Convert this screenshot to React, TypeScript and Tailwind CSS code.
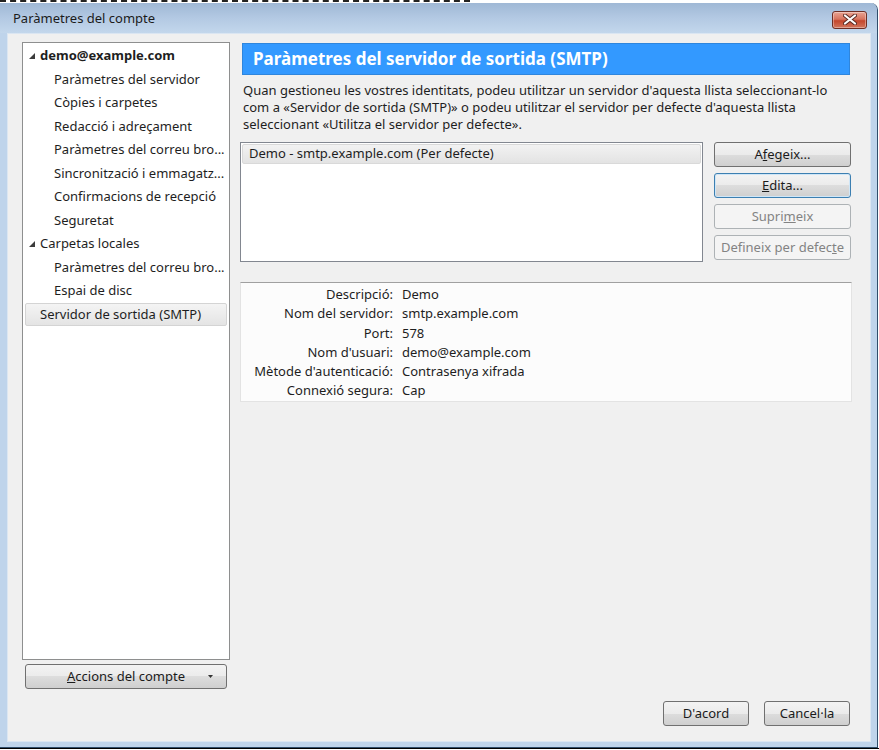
import React from 'react'

const font = { fontFamily: '"Noto Sans", "Open Sans", "Liberation Sans", sans-serif' }

const btnBase =
  'h-[25px] rounded-[3px] border text-[13px] flex items-center justify-center whitespace-nowrap'
const btnNormal =
  'border-[#707070] text-[#1b1b1b] bg-[linear-gradient(to_bottom,#f3f3f3_0%,#ebebeb_50%,#dddddd_50%,#cfcfcf_100%)]'
const btnFocus =
  'border-[#3c7fb1] text-[#1b1b1b] shadow-[inset_0_0_0_1px_#cfe6f7] bg-[linear-gradient(to_bottom,#f3f3f3_0%,#ebebeb_50%,#dddddd_50%,#cfcfcf_100%)]'
const btnDisabled = 'border-[#adb2b5] text-[#838383] bg-[#f4f4f4]'

type TreeItem = { label: string; level: 0 | 1; bold?: boolean; expander?: boolean; selected?: boolean }

const tree: TreeItem[] = [
  { label: 'demo@example.com', level: 0, bold: true, expander: true },
  { label: 'Paràmetres del servidor', level: 1 },
  { label: 'Còpies i carpetes', level: 1 },
  { label: 'Redacció i adreçament', level: 1 },
  { label: 'Paràmetres del correu bro...', level: 1 },
  { label: 'Sincronització i emmagatz...', level: 1 },
  { label: 'Confirmacions de recepció', level: 1 },
  { label: 'Seguretat', level: 1 },
  { label: 'Carpetas locales', level: 0, expander: true },
  { label: 'Paràmetres del correu bro...', level: 1 },
  { label: 'Espai de disc', level: 1 },
  { label: 'Servidor de sortida (SMTP)', level: 0, selected: true },
]

const details: [string, string][] = [
  ['Descripció:', 'Demo'],
  ['Nom del servidor:', 'smtp.example.com'],
  ['Port:', '578'],
  ["Nom d'usuari:", 'demo@example.com'],
  ["Mètode d'autenticació:", 'Contrasenya xifrada'],
  ['Connexió segura:', 'Cap'],
]

function Expander() {
  return (
    <svg width="8" height="8" viewBox="0 0 8 8" className="shrink-0">
      <polygon points="7,1 7,7 1,7" fill="#3c3c3c" />
    </svg>
  )
}

function CloseButton() {
  return (
    <div className="w-[35px] h-[18px] rounded-[3px] border border-[#6e2e24] bg-[linear-gradient(to_bottom,#e8a493_0%,#d7735d_45%,#c4462c_55%,#d2765d_100%)] flex items-center justify-center shadow-[inset_0_0_0_1px_rgba(255,255,255,0.35)]">
      <svg width="14" height="11" viewBox="0 0 14 11">
        <path d="M2 1.5 L12 9.5 M12 1.5 L2 9.5" stroke="#5a2a22" strokeWidth="4" strokeLinecap="round" />
        <path d="M2 1.5 L12 9.5 M12 1.5 L2 9.5" stroke="#ffffff" strokeWidth="2.2" strokeLinecap="round" />
      </svg>
    </div>
  )
}

export default function App() {
  return (
    <div className="w-[879px] h-[750px] bg-white flex flex-col overflow-hidden text-[#1e1e1e]" style={font}>
      <div className="h-[3px] shrink-0 w-[470px] border-t-2 border-dashed border-[#222]" />
      <div className="w-[878px] h-[745px] shrink-0 flex flex-col rounded-tr-[7px] rounded-tl-[4px] border-r border-b border-[#2f4d6b] bg-[#bfd4eb]">
        <div className="h-[30px] shrink-0 flex items-center justify-between pl-[13px] pr-[10px] rounded-tr-[7px] bg-[linear-gradient(to_bottom,#9fb8d5_0%,#b3c9e3_50%,#c3d7ec_100%)]">
          <span className="text-[13px] text-[#1b1b1b] pt-[2px]">Paràmetres del compte</span>
          <div className="pt-[3px]">
            <CloseButton />
          </div>
        </div>
        <div className="flex-1 mx-[7px] mr-[6px] mb-[5px] bg-[#f0f0f0] border border-[#dbe6f2] flex flex-col pt-[8px] pb-[15px]">
          <div className="flex-1 flex">
            <div className="ml-[14px] w-[208px] flex flex-col">
              <div className="flex-1 bg-white border border-[#8e8f8f] pt-[1px] px-[2px]">
                {tree.map((t, i) => (
                  <div
                    key={i}
                    className={
                      'h-[23.5px] flex items-center text-[13px] whitespace-nowrap ' +
                      (t.level === 0 ? 'pl-[3px] ' : 'pl-[29px] ') +
                      (t.selected
                        ? 'border border-[#d4d4d4] rounded-[2px] bg-[linear-gradient(to_bottom,#f4f4f4,#e4e4e4)] pl-[14px]'
                        : '')
                    }
                  >
                    {t.expander && (
                      <span className="w-[12px] flex items-center">
                        <Expander />
                      </span>
                    )}
                    <span className={t.bold ? 'font-bold' : ''}>{t.label}</span>
                  </div>
                ))}
              </div>
              <button className={btnBase + ' ' + btnNormal + ' mt-[4px] mx-[3px] h-[24px] relative'}>
                <span>
                  <u>A</u>ccions del compte
                </span>
                <svg width="5" height="3" viewBox="0 0 5 3" className="absolute right-[13px] top-[10px]">
                  <polygon points="0,0 5,0 2.5,3" fill="#333" />
                </svg>
              </button>
            </div>
            <div className="ml-[10px] w-[612px] flex flex-col">
              <div className="mx-[2px] mt-[1px] h-[32px] bg-[#3399ff] border border-[#2f86dd] flex items-center pl-[10px]">
                <span className="text-white font-bold text-[17px]">Paràmetres del servidor de sortida (SMTP)</span>
              </div>
              <p className="mt-[7px] ml-[3px] text-[13px] leading-[17px] whitespace-nowrap">
                Quan gestioneu les vostres identitats, podeu utilitzar un servidor d'aquesta llista seleccionant-lo
                <br />
                com a «Servidor de sortida (SMTP)» o podeu utilitzar el servidor per defecte d'aquesta llista
                <br />
                seleccionant «Utilitza el servidor per defecte».
              </p>
              <div className="mt-[9px] flex">
                <div className="w-[463px] h-[120px] bg-white border border-[#828790] p-px">
                  <div className="h-[20px] border border-[#d9d9d9] rounded-[2px] bg-[linear-gradient(to_bottom,#f2f2f2,#e3e3e3)] flex items-center pl-[6px] text-[13px] whitespace-nowrap">
                    Demo - smtp.example.com (Per defecte)
                  </div>
                </div>
                <div className="ml-[11px] w-[137px] flex flex-col gap-[6px]">
                  <button className={btnBase + ' ' + btnNormal}>
                    <span>
                      A<u>f</u>egeix...
                    </span>
                  </button>
                  <button className={btnBase + ' ' + btnFocus}>
                    <span>
                      <u>E</u>dita...
                    </span>
                  </button>
                  <button className={btnBase + ' ' + btnDisabled}>
                    <span>
                      Supri<u>m</u>eix
                    </span>
                  </button>
                  <button className={btnBase + ' ' + btnDisabled}>
                    <span>
                      Defineix per defec<u>t</u>e
                    </span>
                  </button>
                </div>
              </div>
              <div className="mt-[20px] h-[120px] bg-[#fcfcfc] border border-[#e3e3e3] border-t-[#a0a0a0] pt-[2px] grid grid-cols-[152px_1fr] gap-x-[9px] auto-rows-[19.3px] text-[13px] items-center content-start">
                {details.map(([k, v]) => (
                  <React.Fragment key={k}>
                    <span className="text-right whitespace-nowrap">{k}</span>
                    <span className="whitespace-nowrap">{v}</span>
                  </React.Fragment>
                ))}
              </div>
            </div>
          </div>
          <div className="mt-[12px] flex justify-end gap-[15px] pr-[20px]">
            <button className={btnBase + ' ' + btnNormal + ' w-[86px]'}>D'acord</button>
            <button className={btnBase + ' ' + btnNormal + ' w-[86px]'}>Cancel·la</button>
          </div>
        </div>
      </div>
      <div className="h-px bg-black" />
    </div>
  )
}
